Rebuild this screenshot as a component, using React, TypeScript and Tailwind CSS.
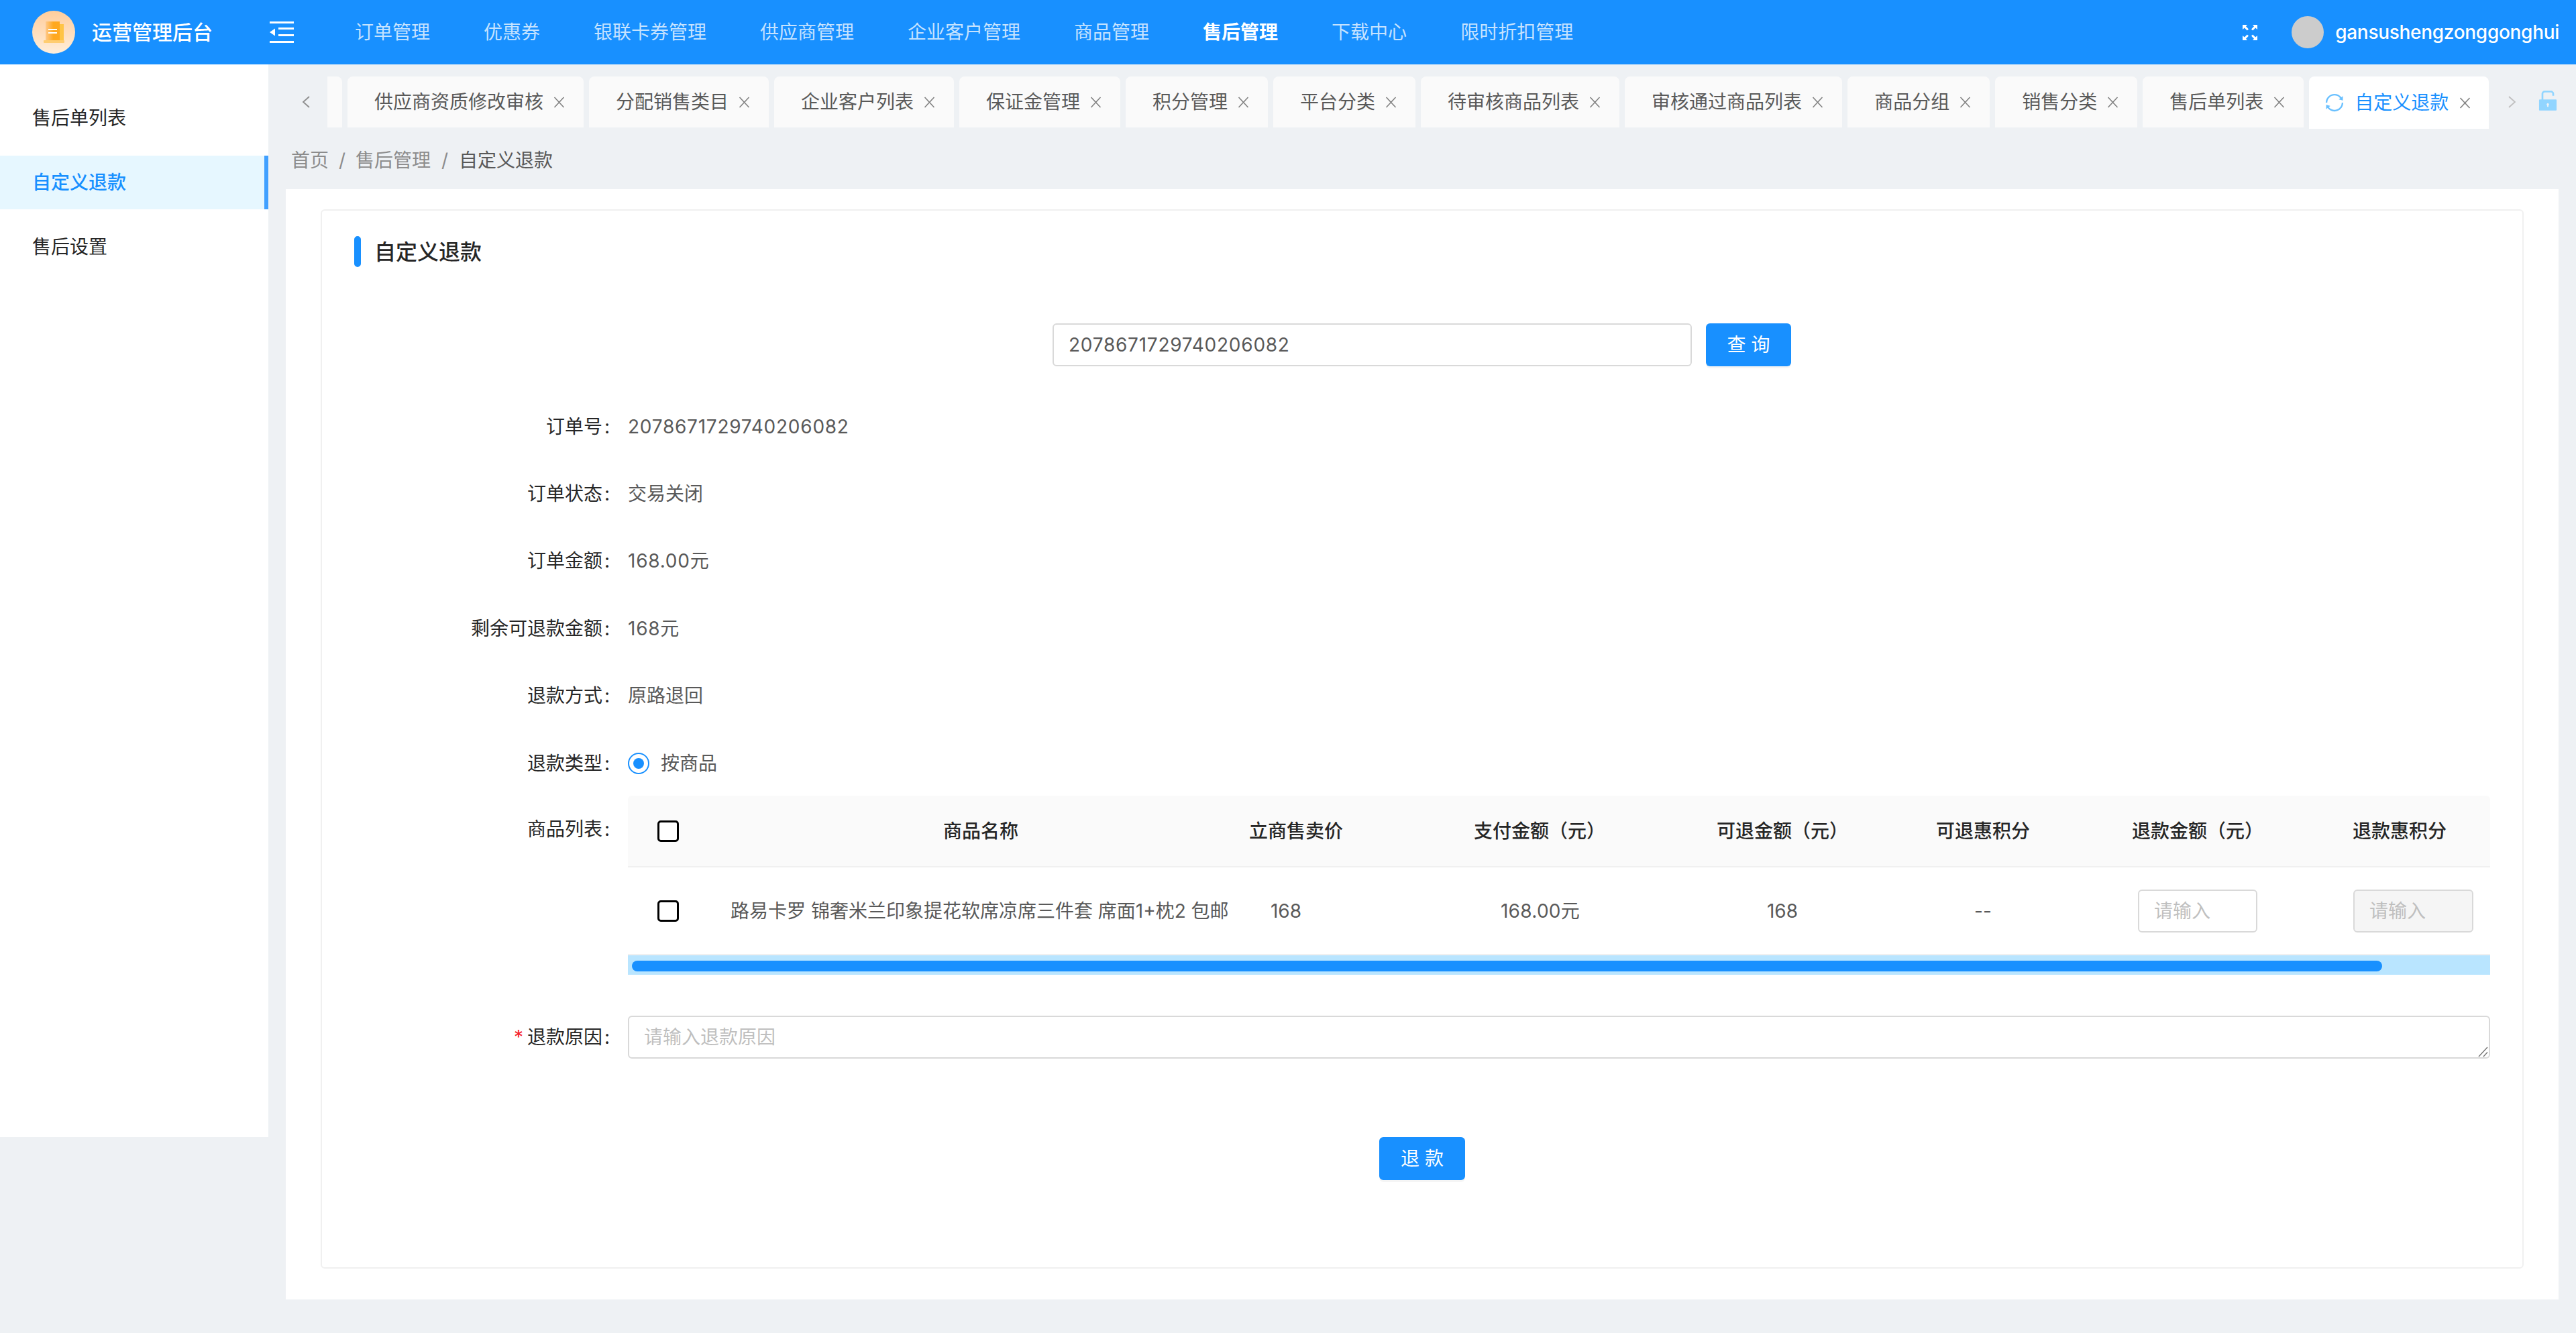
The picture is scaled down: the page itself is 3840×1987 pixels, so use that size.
import { AiFillUnlock, AiOutlineSync } from 'react-icons/ai';

const navItems = ['订单管理', '优惠券', '银联卡券管理', '供应商管理', '企业客户管理', '商品管理', '售后管理', '下载中心', '限时折扣管理'];
const tabs = ['供应商资质修改审核', '分配销售类目', '企业客户列表', '保证金管理', '积分管理', '平台分类', '待审核商品列表', '审核通过商品列表', '商品分组', '销售分类', '售后单列表'];
const sideItems = ['售后单列表', '自定义退款', '售后设置'];

function CloseIcon() {
  return (
    <svg width="17" height="17" viewBox="0 0 17 17" className="shrink-0 text-[#808080]">
      <path d="M1.5 1 L15.5 16 M15.5 1 L1.5 16" stroke="currentColor" strokeWidth="1.6" fill="none" />
    </svg>
  );
}

function Chevron({ dir }: { dir: 'left' | 'right' }) {
  return (
    <svg width="12" height="18" viewBox="0 0 12 18" className="shrink-0">
      <path d={dir === 'left' ? 'M11 1 L2 9 L11 17' : 'M1 1 L10 9 L1 17'} stroke={dir === 'left' ? '#8c8c8c' : '#bfbfbf'} strokeWidth="1.8" fill="none" />
    </svg>
  );
}

function Logo() {
  return (
    <div className="w-16 h-16 rounded-full bg-gradient-to-b from-[#ffcd9c] to-[#ffeeda] shrink-0">
      <svg width="64" height="64" viewBox="0 0 64 64">
        <defs>
          <linearGradient id="doc" x1="0" y1="0" x2="1" y2="0">
            <stop offset="0" stopColor="#ffc98a" />
            <stop offset="0.55" stopColor="#ffa81f" />
            <stop offset="1" stopColor="#ffa81f" />
          </linearGradient>
        </defs>
        <rect x="40" y="20" width="7" height="27" fill="#ffc445" />
        <rect x="20" y="16" width="21" height="31" fill="url(#doc)" />
        <rect x="17" y="44" width="31" height="4" rx="1" fill="#ffcd70" />
        <rect x="24" y="27" width="13" height="2" fill="#fff" />
        <rect x="24" y="32" width="13" height="2" fill="#fff" />
      </svg>
    </div>
  );
}

function MenuIcon() {
  return (
    <svg width="36" height="32" viewBox="0 0 36 32" className="shrink-0">
      <rect x="0" y="0" width="36" height="3" fill="#fff" />
      <rect x="13" y="9" width="23" height="3" fill="#fff" />
      <rect x="13" y="19" width="23" height="3" fill="#fff" />
      <rect x="0" y="29" width="36" height="3" fill="#fff" />
      <path d="M0 16 L8 10.5 L8 21.5 Z" fill="#fff" />
    </svg>
  );
}

function ExpandIcon() {
  return (
    <svg width="22" height="23" viewBox="0 0 22 23" fill="#fff">
      <path d="M0 0 H7 L5 2.2 L9 6.5 L6.8 8.6 L2.8 4.4 L0 7 Z" />
      <path d="M22 0 H15 L17 2.2 L13 6.5 L15.2 8.6 L19.2 4.4 L22 7 Z" />
      <path d="M0 23 H7 L5 20.8 L9 16.5 L6.8 14.4 L2.8 18.6 L0 16 Z" />
      <path d="M22 23 H15 L17 20.8 L13 16.5 L15.2 14.4 L19.2 18.6 L22 16 Z" />
    </svg>
  );
}

function Header() {
  return (
    <header className="h-24 bg-[#1890ff] flex items-center shrink-0">
      <div className="ml-12">
        <Logo />
      </div>
      <span className="ml-[25px] text-[30px] font-medium text-white">运营管理后台</span>
      <div className="ml-[85px]">
        <MenuIcon />
      </div>
      <nav className="ml-[91px] flex gap-20">
        {navItems.map((item) => (
          <span key={item} className={item === '售后管理' ? 'text-[28px] font-bold text-white' : 'text-[28px] text-white/75'}>
            {item}
          </span>
        ))}
      </nav>
      <div className="ml-auto mr-[25px] flex items-center">
        <ExpandIcon />
        <div className="ml-[51px] w-12 h-12 rounded-full bg-[#cccccc]" />
        <span className="ml-[17px] text-[28px] font-medium text-white tracking-[-0.3px]">gansushengzonggonghui</span>
      </div>
    </header>
  );
}

function Sidebar() {
  return (
    <aside className="w-[400px] h-[1599px] bg-white pt-10 flex flex-col gap-4 shrink-0">
      {sideItems.map((item) => (
        <div
          key={item}
          className={
            item === '自定义退款'
              ? 'h-20 flex items-center pl-12 text-[28px] font-medium text-[#1890ff] bg-[#e6f7ff] border-r-[6px] border-[#40a0ff]'
              : 'h-20 flex items-center pl-12 text-[28px] text-[#262626]'
          }
        >
          {item}
        </div>
      ))}
    </aside>
  );
}

function TabBar() {
  return (
    <div className="h-[94px] pt-[18px] flex items-start">
      <div className="w-[88px] h-[76px] flex items-center justify-end pr-[26px]">
        <Chevron dir="left" />
      </div>
      <div className="w-[22px] h-[76px] bg-[#fafafa] rounded-tr-lg mr-2" />
      <div className="flex gap-2">
        {tabs.map((tab) => (
          <div key={tab} className="h-[76px] pl-10 pr-7 flex items-center gap-[15px] bg-[#fafafa] rounded-t-lg text-[28px] text-[#595959] whitespace-nowrap">
            <span>{tab}</span>
            <CloseIcon />
          </div>
        ))}
        <div className="h-[78px] w-[268px] pl-[22px] flex items-center bg-white rounded-t-lg text-[28px] text-[#1890ff] whitespace-nowrap">
          <AiOutlineSync size={32} className="text-[#69c0ff] shrink-0" />
          <span className="ml-[14px]">自定义退款</span>
          <span className="ml-[16px]">
            <CloseIcon />
          </span>
        </div>
      </div>
      <div className="ml-[29px] h-[76px] flex items-center">
        <Chevron dir="right" />
      </div>
      <div className="ml-[28px] h-[76px] flex items-center">
        <AiFillUnlock size={38} className="text-[#91d5ff] -mt-1" />
      </div>
    </div>
  );
}

function Breadcrumb() {
  return (
    <div className="h-[92px] pl-[34px] pt-[6px] flex items-center text-[28px] text-[#8c8c8c]">
      <span>首页</span>
      <span className="w-10 text-center">/</span>
      <span>售后管理</span>
      <span className="w-[42px] text-center">/</span>
      <span className="text-[#595959]">自定义退款</span>
    </div>
  );
}

function FormRow({ label, children }: { label: string; children: React.ReactNode }) {
  return (
    <div className="h-[100.4px] pt-[3px] flex items-center">
      <div className="w-[456px] pr-[27px] flex justify-end text-[28px] text-[#262626]">
        {label}
        <span className="ml-[3px]">:</span>
      </div>
      <div className="text-[28px] text-[#595959]">{children}</div>
    </div>
  );
}

function ProductTable() {
  return (
    <div className="min-w-[2776px]">
      <div className="h-[107px] flex items-center bg-[#fafafa] border-b-2 border-[#f0f0f0] rounded-t-md text-[28px] font-medium text-[#262626] whitespace-nowrap">
        <div className="w-[136px] pl-11 flex">
          <input type="checkbox" className="appearance-none w-8 h-8 bg-white border-[3px] border-black rounded-[5px]" />
        </div>
        <div className="w-[780px] flex justify-center">商品名称</div>
        <div className="w-[160px] mr-[100px] flex justify-center">立商售卖价</div>
        <div className="w-[366px] flex justify-center">支付金额（元）</div>
        <div className="w-[358px] flex justify-center">可退金额（元）</div>
        <div className="w-[240px] flex justify-center">可退惠积分</div>
        <div className="w-[400px] flex justify-center">退款金额（元）</div>
        <div className="w-[202px] flex justify-center">退款惠积分</div>
      </div>
      <div className="h-[131px] flex items-center border-b-2 border-[#f0f0f0] text-[28px] text-[#595959] whitespace-nowrap">
        <div className="w-[136px] pl-11 flex">
          <input type="checkbox" className="appearance-none w-8 h-8 bg-white border-[3px] border-black rounded-[5px]" />
        </div>
        <div className="w-[768px] pl-[17px]">路易卡罗 锦奢米兰印象提花软席凉席三件套 席面1+枕2 包邮</div>
        <div className="w-[154px] flex justify-center">168</div>
        <div className="w-[604px] flex justify-center tracking-[0.3px]">168.00元</div>
        <div className="w-[118px] flex justify-center">168</div>
        <div className="w-[462px] ml-[9px] flex justify-center">--</div>
        <input placeholder="请输入" className="w-[178px] h-16 px-[22px] bg-white border-2 border-[#d9d9d9] rounded-md text-[28px] placeholder:text-[#bfbfbf] outline-none" />
        <input disabled placeholder="请输入" className="w-[179px] h-16 ml-[143px] px-[22px] bg-[#f5f5f5] border-2 border-[#d9d9d9] rounded-md text-[28px] placeholder:text-[#bfbfbf] outline-none" />
      </div>
      <div className="h-[29px] bg-[#b9e5ff] pt-2 pl-1.5">
        <div className="w-[2609px] h-4 rounded-lg bg-[#1890ff]" />
      </div>
    </div>
  );
}

function Content() {
  return (
    <div className="mr-[26px] h-[1655px] bg-white pt-[30px] px-[52px]">
      <div className="h-[1579px] border-2 border-[#f0f0f0] rounded-md">
        <div className="pt-[35px] pl-12 flex items-center">
          <div className="w-2.5 h-[46px] rounded-md bg-[#1890ff]" />
          <span className="ml-[20px] pt-[3px] text-[32px] font-medium text-[#262626]">自定义退款</span>
        </div>
        <div className="mt-[82px] flex justify-center gap-[21px] pr-[1px]">
          <input
            defaultValue="2078671729740206082"
            className="w-[953px] h-16 px-[22px] bg-white border-2 border-[#d9d9d9] rounded-md text-[28px] tracking-[0.75px] text-[#595959] outline-none"
          />
          <button className="w-[127px] h-16 rounded-md bg-[#1890ff] text-[28px] text-white shadow-[0_3px_0_rgba(0,0,0,0.04)]">查 询</button>
        </div>
        <div className="mt-[38px]">
          <FormRow label="订单号">
            <span className="tracking-[0.75px]">2078671729740206082</span>
          </FormRow>
          <FormRow label="订单状态">交易关闭</FormRow>
          <FormRow label="订单金额">
            <span className="tracking-[0.75px]">168.00元</span>
          </FormRow>
          <FormRow label="剩余可退款金额">
            <span className="tracking-[0.75px]">168元</span>
          </FormRow>
          <FormRow label="退款方式">原路退回</FormRow>
          <FormRow label="退款类型">
            <div className="flex items-center gap-[17px]">
              <span className="w-8 h-8 rounded-full border-2 border-[#1890ff] flex items-center justify-center">
                <span className="w-4 h-4 rounded-full bg-[#1890ff]" />
              </span>
              按商品
            </div>
          </FormRow>
        </div>
        <div className="flex items-start">
          <div className="w-[456px] h-[100px] pr-[27px] flex items-center justify-end text-[28px] text-[#262626]">
            商品列表
            <span className="ml-[3px]">:</span>
          </div>
          <ProductTable />
        </div>
        <div className="mt-[61px] flex items-center">
          <div className="w-[456px] pr-[27px] flex justify-end items-center text-[28px] text-[#262626]">
            <span className="mr-[6px] text-[#f5222d]">*</span>
            退款原因
            <span className="ml-[3px]">:</span>
          </div>
          <div className="relative flex">
            <textarea
              placeholder="请输入退款原因"
              className="w-[2776px] h-16 px-[22px] py-[12px] bg-white border-2 border-[#d9d9d9] rounded-md text-[28px] leading-[36px] placeholder:text-[#bfbfbf] outline-none resize-none"
            />
            <svg width="16" height="16" viewBox="0 0 16 16" className="absolute right-[2px] bottom-[2px]">
              <path d="M1 15 L14 1 M8 15 L14 8.5" stroke="#757575" strokeWidth="1.4" fill="none" />
            </svg>
          </div>
        </div>
        <div className="mt-[117px] flex justify-center">
          <button className="w-[128px] h-16 rounded-md bg-[#1890ff] text-[28px] text-white shadow-[0_3px_0_rgba(0,0,0,0.04)]">退 款</button>
        </div>
      </div>
    </div>
  );
}

export default function App() {
  return (
    <div className="h-[1987px] bg-[#eef1f4] flex flex-col overflow-hidden font-['Inter','Noto_Sans_CJK_SC',sans-serif]">
      <Header />
      <div className="flex flex-1">
        <Sidebar />
        <main className="flex-1 min-w-0">
          <TabBar />
          <Breadcrumb />
          <div className="pl-[26px]">
            <Content />
          </div>
        </main>
      </div>
    </div>
  );
}
